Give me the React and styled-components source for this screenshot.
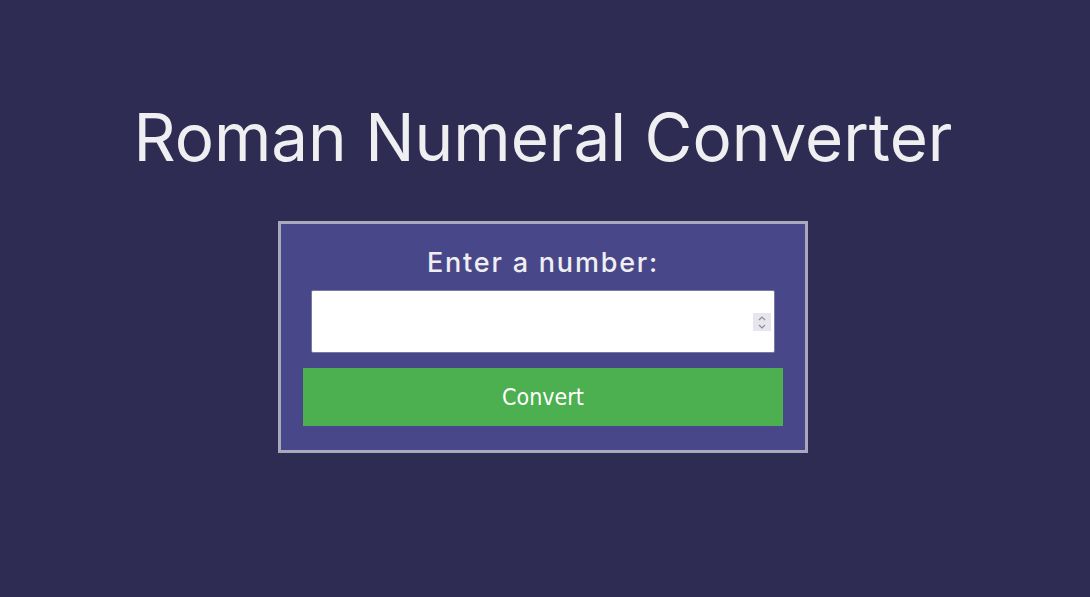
import styled, { createGlobalStyle } from "styled-components";

const GlobalStyle = createGlobalStyle`
  html, body {
    margin: 0;
    padding: 0;
    background: #2e2c53;
  }
  * {
    box-sizing: border-box;
  }
`;

const App = () => {
  return (
    <Page>
      <GlobalStyle />
      <Title>Roman Numeral Converter</Title>
      <Form>
        <Label htmlFor="number">Enter a number:</Label>
        <InputWrap>
          <NumberInput id="number" type="number" />
          <Spinner aria-hidden="true">
            <svg width="8" height="5" viewBox="0 0 8 5">
              <path d="M1 4L4 1L7 4" fill="none" stroke="#8b8aa0" strokeWidth="1.2" />
            </svg>
            <svg width="8" height="5" viewBox="0 0 8 5">
              <path d="M1 1L4 4L7 1" fill="none" stroke="#8b8aa0" strokeWidth="1.2" />
            </svg>
          </Spinner>
        </InputWrap>
        <ConvertButton type="button">Convert</ConvertButton>
      </Form>
    </Page>
  );
};

const Page = styled.main`
  display: flex;
  flex-direction: column;
  align-items: center;
  min-height: 597px;
  padding: 99px 4px 0 0;
  background: #2e2c53;
`;

const Title = styled.h1`
  margin: 0 0 44px;
  font-family: Inter, "Open Sans", sans-serif;
  font-size: 65.5px;
  font-weight: 400;
  line-height: 78px;
  color: #efeff1;
`;

const Form = styled.form`
  display: flex;
  flex-direction: column;
  align-items: center;
  width: 530px;
  padding: 21px 22px 24px;
  background: #48478a;
  border: 3px solid #a9a8bc;
`;

const Label = styled.label`
  font-family: Inter, "Open Sans", sans-serif;
  font-size: 27px;
  font-weight: 500;
  letter-spacing: 1.8px;
  line-height: 36px;
  color: #efeff1;
  margin-bottom: 9px;
`;

const InputWrap = styled.div`
  position: relative;
  width: 464px;
  height: 63px;
  margin-bottom: 15px;
`;

const NumberInput = styled.input`
  width: 100%;
  height: 100%;
  border: 1px solid #7a799e;
  border-radius: 2px;
  background: #ffffff;
  padding: 0 28px 0 10px;
  font-size: 22px;
  appearance: textfield;

  &::-webkit-inner-spin-button,
  &::-webkit-outer-spin-button {
    -webkit-appearance: none;
    margin: 0;
  }
`;

const Spinner = styled.div`
  position: absolute;
  top: 23px;
  right: 4px;
  width: 18px;
  height: 18px;
  display: flex;
  flex-direction: column;
  align-items: center;
  justify-content: center;
  gap: 3px;
  background: #e6e6ec;
  pointer-events: none;
`;

const ConvertButton = styled.button`
  width: 480px;
  height: 58px;
  border: none;
  background: #4caf50;
  color: #ffffff;
  font-family: "DejaVu Sans Condensed", "DejaVu Sans", sans-serif;
  font-size: 23px;
  cursor: pointer;
`;

export default App;
